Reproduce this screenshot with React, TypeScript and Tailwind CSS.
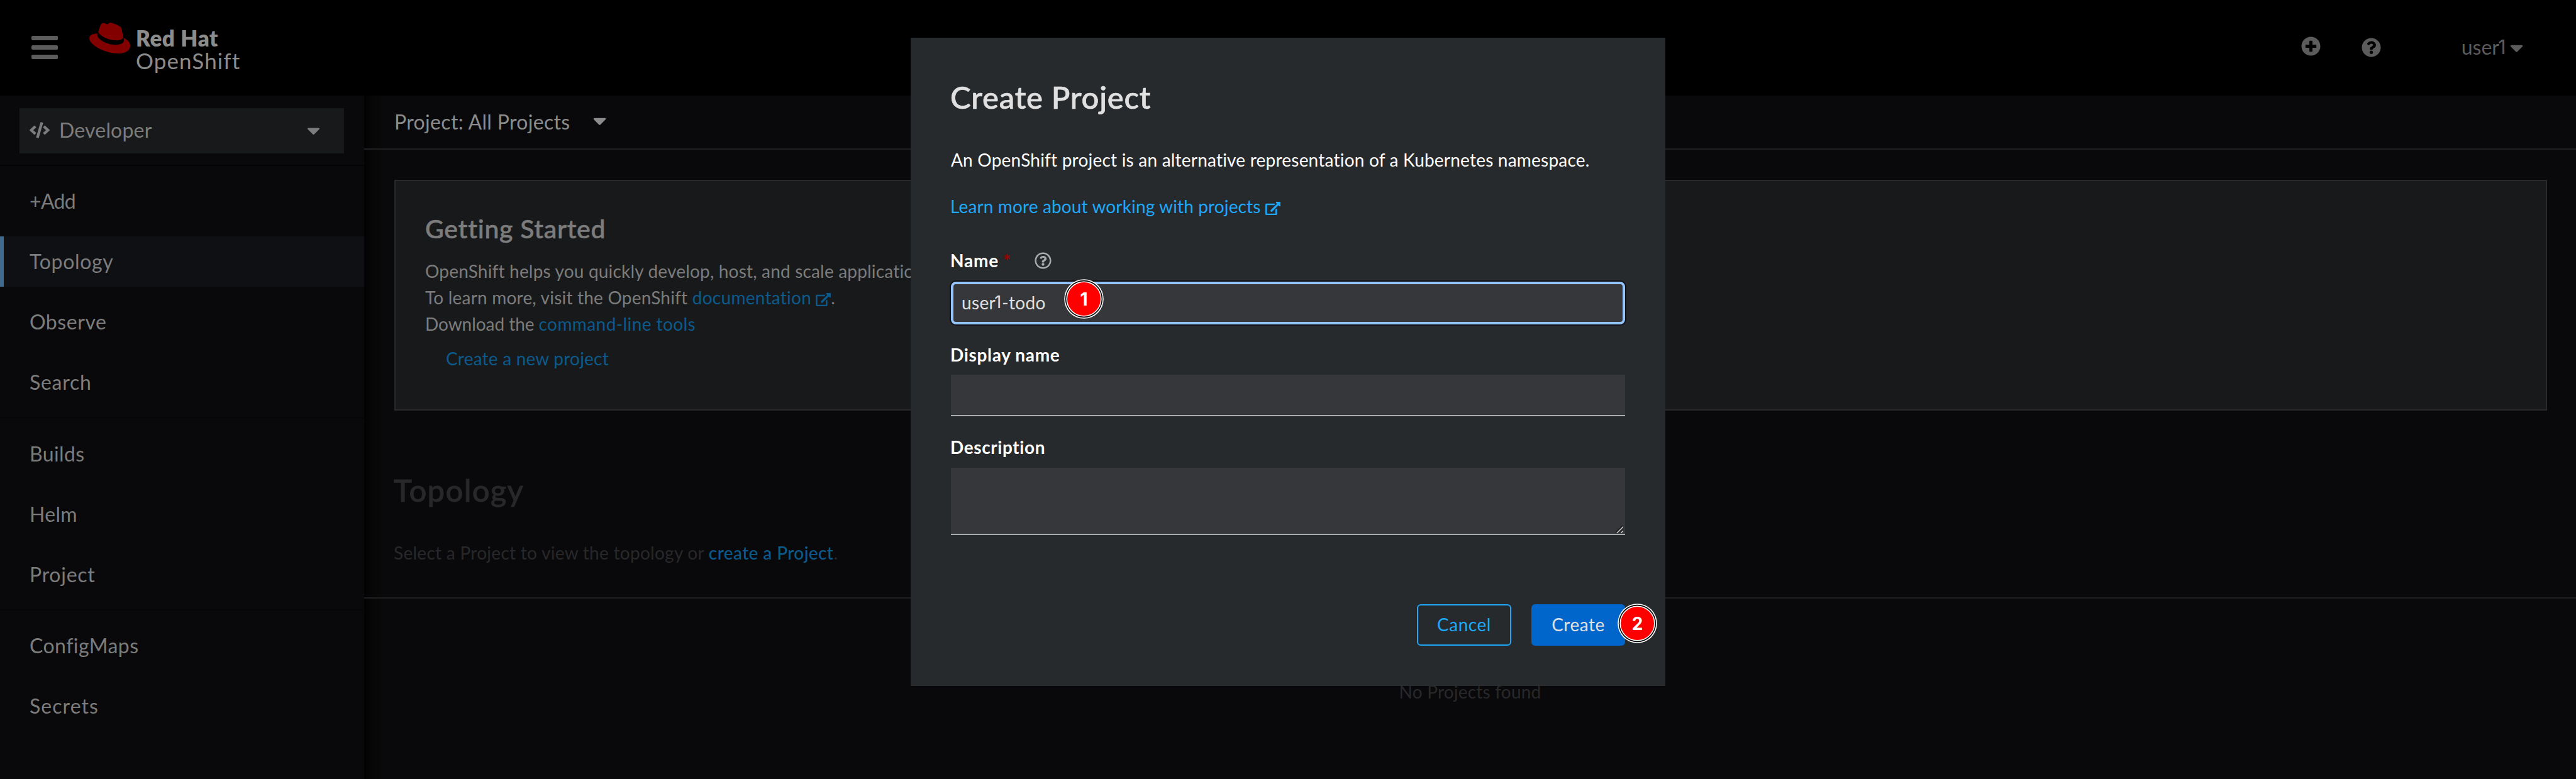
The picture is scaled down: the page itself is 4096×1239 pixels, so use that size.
import React from "react";
import {
  FaCaretDown,
  FaCode,
  FaPlusCircle,
  FaQuestionCircle,
  FaRegQuestionCircle,
} from "react-icons/fa";
import { SiRedhat } from "react-icons/si";

const ExternalLink = ({ className = "" }: { className?: string }) => (
  <svg
    viewBox="0 0 576 512"
    fill="currentColor"
    className={`inline-block h-[21.3px] w-6 ${className}`}
  >
    <path d="M576 24v127.984c0 21.461-25.96 31.98-40.971 16.971l-35.707-35.709-243.523 243.523c-9.373 9.373-24.568 9.373-33.941 0l-22.627-22.627c-9.373-9.373-9.373-24.569 0-33.941L442.756 76.676l-35.703-35.705C391.982 25.9 402.656 0 424.024 0H552c13.255 0 24 10.745 24 24zM407.029 270.794l-16 16A23.999 23.999 0 0 0 384 303.765V448H64V128h264a24.003 24.003 0 0 0 16.97-7.029l16-16C376.089 89.851 365.381 64 344 64H48C21.49 64 0 85.49 0 112v352c0 26.51 21.49 48 48 48h352c26.51 0 48-21.49 48-48V287.764c0-21.382-25.852-32.09-40.971-16.97z" />
  </svg>
);

const Masthead = () => (
  <header className="flex h-[152px] shrink-0 items-start bg-black">
    <div className="mt-[57px] ml-[50px] flex w-[42px] flex-col gap-2">
      <span className="h-[7px] rounded-[2px] bg-[#5c5c5c]" />
      <span className="h-[7px] rounded-[2px] bg-[#5c5c5c]" />
      <span className="h-[7px] rounded-[2px] bg-[#5c5c5c]" />
    </div>
    <SiRedhat className="mt-[28px] ml-[50px] size-[65px] text-[#820000]" />
    <div className="mt-[42px] ml-[8px] text-[35px] leading-[36px] text-[#8c8c8c]">
      <div className="ml-[1px] font-extrabold tracking-[0.6px]">Red Hat</div>
      <div className="ml-[1px] tracking-[1.1px]">OpenShift</div>
    </div>
    <div className="ml-auto flex h-[152px] items-center pr-[84px] text-[#5c5c5c]">
      <FaPlusCircle className="mb-[5px] size-[31px]" />
      <FaQuestionCircle className="mb-[1px] ml-[65px] size-[31px]" />
      <span className="mb-[3px] ml-[128px] flex text-[32px] leading-[40px]">
        user<span className="-ml-[2px] w-[14px] font-['Inter'] text-[31px]">1</span>
      </span>
      <FaCaretDown className="ml-[5px] h-[34px] w-[21px]" />
    </div>
  </header>
);

const NavItem = ({ children, active = false }: { children: React.ReactNode; active?: boolean }) => (
  <div
    className={
      active
        ? "h-20 border-l-[6px] border-[#406b8f] bg-[#0f1014] pl-[41px] text-[32px] leading-[80px]"
        : "h-20 pl-[47px] text-[32px] leading-[80px]"
    }
  >
    {children}
  </div>
);

const Sidebar = () => (
  <aside className="w-[579px] shrink-0 bg-[#09090b] text-[#7c7c7c]">
    <div className="border-b-2 border-[#040405] pt-[20px] pr-8 pb-[18px] pl-[31px]">
      <div className="flex h-[72px] items-center bg-[#18191b] pl-4">
        <FaCode className="mb-[2px] h-[26px] w-8" />
        <span className="mb-[3px] ml-[15px] text-[32px] tracking-[0.19px]">Developer</span>
        <FaCaretDown className="mr-[38px] mb-[2px] ml-auto h-[33px] w-[21px]" />
      </div>
    </div>
    <nav>
      <div className="flex flex-col gap-4 border-b border-[#040405] py-4">
        <NavItem>
          <span className="tracking-[-0.68px]">+Add</span>
        </NavItem>
        <NavItem active>
          <span className="tracking-[0.69px]">Topology</span>
        </NavItem>
        <NavItem>
          <span className="tracking-[0.56px]">Observe</span>
        </NavItem>
        <NavItem>
          <span className="tracking-[0.72px]">Search</span>
        </NavItem>
      </div>
      <div className="flex flex-col gap-4 border-b border-[#040405] pt-[17px] pb-4">
        <NavItem>
          <span className="tracking-[0.38px]">Builds</span>
        </NavItem>
        <NavItem>
          <span className="tracking-[0.32px]">Helm</span>
        </NavItem>
        <NavItem>
          <span className="tracking-[0.73px]">Project</span>
        </NavItem>
      </div>
      <div className="flex flex-col gap-4 py-4">
        <NavItem>
          <span className="tracking-[0.46px]">ConfigMaps</span>
        </NavItem>
        <NavItem>
          <span className="tracking-[1.06px]">Secrets</span>
        </NavItem>
      </div>
    </nav>
  </aside>
);

const GettingStarted = () => (
  <section className="mt-12 mr-[46px] ml-12 h-[367px] border-2 border-[#29292b] bg-[#18191b] pt-[52px] pl-[47px] text-[28px] leading-[42px] text-[#7c7c7c]">
    <h2 className="text-[41px] leading-[48px] font-medium tracking-[0.7px] [-webkit-text-stroke:0.6px]">
      Getting Started
    </h2>
    <div className="mt-[22px] tracking-[0.18px]">
      <p>OpenShift helps you quickly develop, host, and scale applications.</p>
      <p>
        <span className="tracking-[0.2px]">To learn more, visit the OpenShift </span>
        <a className="tracking-[0.28px] text-[#0c5a8c]">
          documentation
          <ExternalLink className="ml-[7px] align-[-3px]" />
        </a>
        .
      </p>
      <p>
        <span className="tracking-[-0.05px]">Download the </span>
        <a className="tracking-[0.41px] text-[#0c5a8c]">command-line tools</a>
      </p>
    </div>
    <a className="mt-[13px] ml-[33px] block tracking-[0.21px] text-[#0c5a8c]">
      Create a new project
    </a>
  </section>
);

const Main = () => (
  <main className="flex flex-1 flex-col bg-[linear-gradient(to_right,#020202,#070707_14px,#09090b_34px)]">
    <div className="flex h-[86px] items-center border-b-2 border-[#202022] pl-[48px] text-[#8c8c8c]">
      <span className="text-[32px] leading-[84px] tracking-[0.33px]">Project: All Projects</span>
      <FaCaretDown className="mb-[5px] ml-[36px] h-[34px] w-[21px]" />
    </div>
    <GettingStarted />
    <div className="mt-[98px] ml-[47px] text-[#28282a]">
      <h1 className="text-[49px] leading-[56px] font-medium tracking-[1.3px] [-webkit-text-stroke:0.8px]">
        Topology
      </h1>
      <p className="mt-[51px] text-[28px] leading-[42px] tracking-[0.28px]">
        Select a Project to view the topology or{" "}
        <a className="font-medium tracking-[0.39px] text-[#0c5a8c]">create a Project</a>.
      </p>
    </div>
    <div className="mt-[50px] flex justify-center border-t-2 border-[#202022] pt-[127px] text-[28px] leading-[42px] tracking-[0.21px] text-[#28282a]">
      No Projects found
    </div>
  </main>
);

const Marker = ({ className, children }: { className: string; children: React.ReactNode }) => (
  <span
    className={`absolute flex size-[53px] items-center justify-center rounded-full bg-[#ff0000] font-['Inter'] text-[28px] font-bold text-white shadow-[0_0_0_1.6px_#fff,0_0_0_3.2px_#000,0_0_0_4.8px_#fff] ${className}`}
  >
    {children}
  </span>
);

const CreateProjectModal = () => (
  <div className="relative h-[1031px] w-[1200px] bg-[#272a2d] px-16 pt-[66px] text-[28px] leading-[42px] text-white">
    <h1 className="-ml-[1px] text-[49px] leading-[56px] font-medium tracking-[0.75px] text-[#e0e0e0] [-webkit-text-stroke:0.7px]">
      Create Project
    </h1>
    <p className="mt-[51px] tracking-[0.21px]">
      An OpenShift project is an alternative representation of a Kubernetes namespace.
    </p>
    <a className="mt-8 block -ml-[1px] tracking-[0.13px] text-[#1fa7f8]">
      Learn more about working with projects
      <ExternalLink className="ml-[7px] align-[-3px]" />
    </a>
    <label className="mt-11 -ml-[1px] flex items-center font-bold tracking-[0.79px]">
      Name
      <span className="ml-[7px] font-bold text-[#a30000]">*</span>
      <FaRegQuestionCircle className="ml-[37px] size-[27px] text-[#a9abad]" />
    </label>
    <div className="mt-[13px] flex h-[68px] items-center rounded-[8px] border-4 border-[#93c3fd] bg-[#36373a] pb-[3px] pl-[13px] tracking-[0.35px] text-[#e0e0e0] shadow-[0_0_0_2px_#101012]">
      user<span className="-ml-[2px] w-[12px] font-['Inter'] text-[27px]">1</span>-todo
    </div>
    <label className="mt-[27px] -ml-[1px] block font-bold tracking-[0.67px]">Display name</label>
    <div className="mt-[11px] h-[66px] border-b-2 border-[#a9abad] bg-[#36373a]" />
    <label className="mt-7 -ml-[1px] block font-bold tracking-[0.59px]">Description</label>
    <div className="mt-3 flex h-[107px] items-end justify-end border-b-2 border-[#a9abad] bg-[#36373a] pr-[3px] pb-[1px]">
      <svg viewBox="0 0 12 12" className="size-[12px]" fill="none" strokeWidth="1.6">
        <path d="M0 11.5 11.5 0M6.5 11.5 11.5 6.5" stroke="#111" />
        <path d="M1.6 12 12 1.6M8 12l4-4" stroke="#c4c4c4" />
      </svg>
    </div>
    <div className="mt-[110px] flex justify-end gap-8">
      <button className="h-[66px] w-[150px] rounded-[6px] border-2 border-[#1fa7f8] pb-[2px] tracking-[0.54px] text-[#1fa7f8]">
        Cancel
      </button>
      <button className="h-[66px] w-[149px] rounded-[6px] bg-[#0066cc] pb-[2px] tracking-[0.5px] text-[#e0e0e0]">
        Create
      </button>
    </div>
    <Marker className="top-[389px] left-[249px]">1</Marker>
    <Marker className="top-[905px] left-[1129px]">2</Marker>
  </div>
);

export default function App() {
  return (
    <div className="relative flex h-[1239px] w-[4096px] flex-col overflow-hidden bg-[#09090b] font-['Lato',sans-serif] [font-variant-ligatures:none]">
      <Masthead />
      <div className="flex flex-1">
        <Sidebar />
        <Main />
      </div>
      <div className="absolute inset-0 flex items-start justify-center pt-[60px]">
        <CreateProjectModal />
      </div>
    </div>
  );
}
